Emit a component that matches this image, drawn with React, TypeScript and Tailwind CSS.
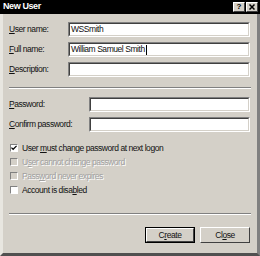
import React from 'react';

const font = "font-['Liberation_Sans','Arial',sans-serif]";

const U = ({ children }: { children: React.ReactNode }) => <span className="underline underline-offset-1 decoration-1">{children}</span>;

const Field = ({ label, value, left, caret }: { label: React.ReactNode; value?: string; left: string; caret?: boolean }) => (
  <div className="flex items-center h-[15px]">
    <div className={`${left} shrink-0 text-[8.5px] tracking-[-0.45px] text-[#111]`}>{label}</div>
    <div className="flex-1 h-[15px] bg-white border-t border-l border-t-[#808080] border-l-[#808080] border-b border-r border-b-white border-r-white">
      <div className="h-full border-t border-l border-t-[#404040] border-l-[#404040] border-b border-r border-b-[#d4d0c8] border-r-[#d4d0c8] flex items-center pl-[1px] text-[8.5px] tracking-[-0.45px] text-[#111]">
        {value}
        {caret && <span className="inline-block w-px h-[10px] bg-black ml-px" />}
      </div>
    </div>
  </div>
);

const Check = ({ label, checked, disabled }: { label: React.ReactNode; checked?: boolean; disabled?: boolean }) => (
  <div className="flex items-center h-[14px]">
    <div className={`w-[8px] h-[8px] shrink-0 border border-t-[#808080] border-l-[#808080] border-b-white border-r-white ${disabled ? 'bg-[#d4d0c8]' : 'bg-white'} flex items-center justify-center`}>
      {checked && (
        <svg width="6" height="6" viewBox="0 0 7 7">
          <path d="M0.5 3 L2.5 5 L6.5 1" stroke="black" strokeWidth="1.4" fill="none" />
        </svg>
      )}
    </div>
    <div className={`ml-[4px] text-[8.5px] tracking-[-0.45px] ${disabled ? 'text-[#a0a0a0] [text-shadow:1px_1px_0_#ffffff]' : 'text-[#111]'}`}>{label}</div>
  </div>
);

const Btn = ({ children, def }: { children: React.ReactNode; def?: boolean }) => (
  <div className={`w-[50px] h-[16px] ${def ? 'border border-black' : ''} bg-[#d4d0c8]`}>
    <div className="h-full border border-t-white border-l-white border-b-[#404040] border-r-[#404040] flex items-center justify-center text-[8.5px] tracking-[-0.45px] text-[#111]">
      {children}
    </div>
  </div>
);

const Sep = () => (
  <div className="h-[2px] border-t border-t-[#808080] border-b border-b-white" />
);

export default function App() {
  return (
    <div className={`w-[260px] h-[256px] bg-[#d4d0c8] flex flex-col ${font} overflow-hidden`}>
      <div className="h-[14px] bg-black flex items-center justify-between pl-[3px] pr-[2px]">
        <span className="text-white font-bold text-[9px] tracking-[-0.4px]">New User</span>
        <div className="flex gap-[1px]">
          <div className="w-[12px] h-[10px] bg-[#d4d0c8] border border-t-white border-l-white border-b-[#404040] border-r-[#404040] flex items-center justify-center text-[8px] font-bold leading-none">?</div>
          <div className="w-[12px] h-[10px] bg-[#d4d0c8] border border-t-white border-l-white border-b-[#404040] border-r-[#404040] flex items-center justify-center">
            <svg width="6" height="6" viewBox="0 0 6 6"><path d="M0.5 0.5 L5.5 5.5 M5.5 0.5 L0.5 5.5" stroke="black" strokeWidth="1.5" /></svg>
          </div>
        </div>
      </div>
      <div className="flex-1 flex flex-col border-l-[3px] border-l-[#e8e6e0] border-r-[3px] border-r-[#808080] border-b-[3px] border-b-[#505050]">
        <div className="flex flex-col px-[6px] pt-[8px]">
          <div className="flex flex-col gap-[5px] pr-[1px]">
            <Field left="w-[59px]" label={<><U>U</U>ser name:</>} value="WSSmith" />
            <Field left="w-[59px]" label={<><U>F</U>ull name:</>} value="William Samuel Smith" caret />
            <Field left="w-[59px]" label={<><U>D</U>escription:</>} />
          </div>
          <div className="mt-[10px]"><Sep /></div>
          <div className="flex flex-col gap-[5px] mt-[8px] pr-[1px]">
            <Field left="w-[80px]" label={<><U>P</U>assword:</>} />
            <Field left="w-[80px]" label={<><U>C</U>onfirm password:</>} />
          </div>
          <div className="flex flex-col mt-[9px] pl-[1px]">
            <Check checked label={<>User <U>m</U>ust change password at next logon</>} />
            <Check disabled label={<>U<U>s</U>er cannot change password</>} />
            <Check disabled label={<>Pass<U>w</U>ord never expires</>} />
            <Check label={<>Account is disa<U>b</U>led</>} />
          </div>
          <div className="mt-[16px]"><Sep /></div>
          <div className="flex justify-end gap-[5px] mt-[12px] pr-[1px]">
            <Btn def>C<U>r</U>eate</Btn>
            <Btn>Cl<U>o</U>se</Btn>
          </div>
        </div>
      </div>
    </div>
  );
}
